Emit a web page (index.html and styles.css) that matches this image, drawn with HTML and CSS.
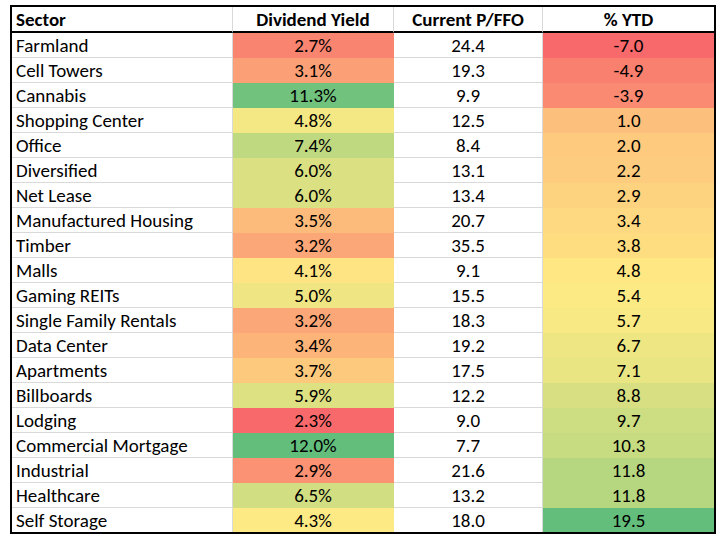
FILE: index.html
```html
<!DOCTYPE html>
<html lang="en">
<head>
<meta charset="utf-8">
<title>REIT Sectors</title>
<link rel="stylesheet" href="styles.css">
</head>
<body>
<table class="sheet">
  <colgroup>
    <col class="c-sector">
    <col class="c-yield">
    <col class="c-pffo">
    <col class="c-ytd">
  </colgroup>
  <thead>
    <tr>
      <th class="left">Sector</th>
      <th>Dividend Yield</th>
      <th>Current P/FFO</th>
      <th class="last">% YTD</th>
    </tr>
  </thead>
  <tbody>
    <tr><td class="left">Farmland</td><td class="heat" style="--c:#f98470">2.7%</td><td>24.4</td><td class="heat last" style="--c:#f8696b">-7.0</td></tr>
    <tr><td class="left">Cell Towers</td><td class="heat" style="--c:#fba076">3.1%</td><td>19.3</td><td class="heat last" style="--c:#f9806f">-4.9</td></tr>
    <tr><td class="left">Cannabis</td><td class="heat" style="--c:#71c27c">11.3%</td><td>9.9</td><td class="heat last" style="--c:#fa8a71">-3.9</td></tr>
    <tr><td class="left">Shopping Center</td><td class="heat" style="--c:#f3e883">4.8%</td><td>12.5</td><td class="heat last" style="--c:#fdbf7c">1.0</td></tr>
    <tr><td class="left">Office</td><td class="heat" style="--c:#bfd980">7.4%</td><td>8.4</td><td class="heat last" style="--c:#fdca7e">2.0</td></tr>
    <tr><td class="left">Diversified</td><td class="heat" style="--c:#dbe182">6.0%</td><td>13.1</td><td class="heat last" style="--c:#fdcc7e">2.2</td></tr>
    <tr><td class="left">Net Lease</td><td class="heat" style="--c:#dbe182">6.0%</td><td>13.4</td><td class="heat last" style="--c:#fed37f">2.9</td></tr>
    <tr><td class="left">Manufactured Housing</td><td class="heat" style="--c:#fcbb7b">3.5%</td><td>20.7</td><td class="heat last" style="--c:#fed981">3.4</td></tr>
    <tr><td class="left">Timber</td><td class="heat" style="--c:#fba777">3.2%</td><td>35.5</td><td class="heat last" style="--c:#fedd81">3.8</td></tr>
    <tr><td class="left">Malls</td><td class="heat" style="--c:#ffe483">4.1%</td><td>9.1</td><td class="heat last" style="--c:#ffe883">4.8</td></tr>
    <tr><td class="left">Gaming REITs</td><td class="heat" style="--c:#efe683">5.0%</td><td>15.5</td><td class="heat last" style="--c:#fcea84">5.4</td></tr>
    <tr><td class="left">Single Family Rentals</td><td class="heat" style="--c:#fba777">3.2%</td><td>18.3</td><td class="heat last" style="--c:#f8e984">5.7</td></tr>
    <tr><td class="left">Data Center</td><td class="heat" style="--c:#fcb479">3.4%</td><td>19.2</td><td class="heat last" style="--c:#eee683">6.7</td></tr>
    <tr><td class="left">Apartments</td><td class="heat" style="--c:#fdc97d">3.7%</td><td>17.5</td><td class="heat last" style="--c:#e9e583">7.1</td></tr>
    <tr><td class="left">Billboards</td><td class="heat" style="--c:#dde182">5.9%</td><td>12.2</td><td class="heat last" style="--c:#d7df82">8.8</td></tr>
    <tr><td class="left">Lodging</td><td class="heat" style="--c:#f8696b">2.3%</td><td>9.0</td><td class="heat last" style="--c:#cddd81">9.7</td></tr>
    <tr><td class="left">Commercial Mortgage</td><td class="heat" style="--c:#63be7b">12.0%</td><td>7.7</td><td class="heat last" style="--c:#c7db81">10.3</td></tr>
    <tr><td class="left">Industrial</td><td class="heat" style="--c:#fa9273">2.9%</td><td>21.6</td><td class="heat last" style="--c:#b6d680">11.8</td></tr>
    <tr><td class="left">Healthcare</td><td class="heat" style="--c:#d1de81">6.5%</td><td>13.2</td><td class="heat last" style="--c:#b6d680">11.8</td></tr>
    <tr class="final"><td class="left">Self Storage</td><td class="heat" style="--c:#fdea84">4.3%</td><td>18.0</td><td class="heat last" style="--c:#63be7b">19.5</td></tr>
  </tbody>
</table>
</body>
</html>
```

FILE: styles.css
```css
html, body {
  margin: 0;
  padding: 0;
  background: #ffffff;
}

body {
  padding: 5px 0 0 10px;
  font-family: Carlito, Lato, "Liberation Sans", sans-serif;
  color: #000000;
}

.sheet {
  border-collapse: separate;
  border-spacing: 0;
  table-layout: fixed;
  width: 702px;
  border: 2px solid #000000;
  font-size: 19px;
}

.c-sector { width: 221px; }
.c-yield  { width: 161px; }
.c-pffo   { width: 149px; }
.c-ytd    { width: 171px; }

.sheet th,
.sheet td {
  box-sizing: border-box;
  padding: 0 3px;
  height: 25px;
  line-height: 23px;
  text-align: center;
  white-space: nowrap;
  overflow: hidden;
  border-right: 1px solid #d9d9d9;
  border-bottom: 1px solid #d9d9d9;
  vertical-align: bottom;
}

.sheet th {
  font-weight: bold;
  height: 26px;
  border-bottom: 2px solid #000000;
}

.sheet .left {
  text-align: left;
  padding-left: 4px;
}

.sheet .last {
  border-right: none;
}

.sheet .heat {
  background: var(--c);
  border-right-color: var(--c);
  border-bottom-color: var(--c);
}

.sheet .final td {
  border-bottom: none;
  height: 24px;
}
```
